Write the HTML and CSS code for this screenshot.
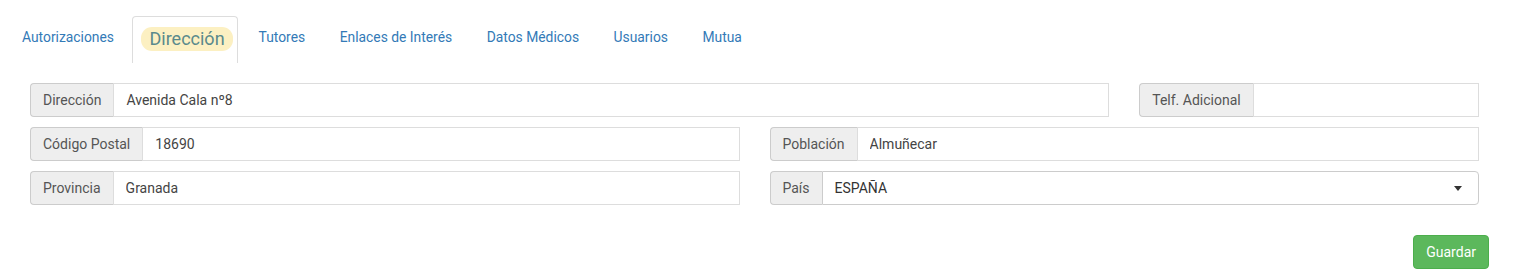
FILE: index.html
```html
<!DOCTYPE html>
<html lang="es">
<head>
    <meta charset="UTF-8">
    <meta name="viewport" content="width=device-width, initial-scale=1.0">
    <title>Dirección</title>
    <link rel="stylesheet" href="styles.css">
</head>
<body>
    <ul class="tabs">
        <li><a href="#">Autorizaciones</a></li>
        <li class="active"><a href="#"><span class="pill">Dirección</span></a></li>
        <li><a href="#">Tutores</a></li>
        <li><a href="#">Enlaces de Interés</a></li>
        <li><a href="#">Datos Médicos</a></li>
        <li><a href="#">Usuarios</a></li>
        <li><a href="#">Mutua</a></li>
    </ul>

    <form class="tab-body" id="direccionForm">
        <div class="row">
            <div class="col col-9">
                <div class="input-group">
                    <span class="addon">Dirección</span>
                    <input type="text" class="field" value="Avenida Cala nº8">
                </div>
            </div>
            <div class="col col-3">
                <div class="input-group">
                    <span class="addon">Telf. Adicional</span>
                    <input type="text" class="field" value="">
                </div>
            </div>
        </div>
        <div class="row">
            <div class="col col-6">
                <div class="input-group">
                    <span class="addon">Código Postal</span>
                    <input type="text" class="field" value="18690">
                </div>
            </div>
            <div class="col col-6">
                <div class="input-group">
                    <span class="addon">Población</span>
                    <input type="text" class="field" value="Almuñecar">
                </div>
            </div>
        </div>
        <div class="row">
            <div class="col col-6">
                <div class="input-group">
                    <span class="addon">Provincia</span>
                    <input type="text" class="field" value="Granada">
                </div>
            </div>
            <div class="col col-6">
                <div class="input-group">
                    <span class="addon">País</span>
                    <span class="select">
                        <span class="select-value">ESPAÑA</span>
                        <span class="caret"></span>
                    </span>
                </div>
            </div>
        </div>

        <div class="actions">
            <button type="submit" class="btn-save">Guardar</button>
        </div>
    </form>
</body>
</html>
```

FILE: styles.css
```css
body {
    font-family: 'Roboto', 'Liberation Sans', sans-serif;
    font-size: 14px;
    margin: 0;
    padding: 0;
    background-color: #fff;
    color: #333;
}

/* pestañas */
.tabs {
    display: flex;
    list-style: none;
    margin: 0;
    padding: 16px 0 0 6px;
}

.tabs li {
    margin-right: 2.5px;
}

.tabs a {
    display: block;
    padding: 10px 15px 16px;
    line-height: 20px;
    font-size: 13.85px;
    color: #337ab7;
    text-decoration: none;
    border: 1px solid transparent;
    border-bottom: 0;
    border-radius: 4px 4px 0 0;
}

.tabs li.active {
    margin-right: 5px;
}

.tabs li.active a {
    padding: 10px 4px 12px 8px;
    border-color: #ddd;
    color: #5a8a8c;
}

.pill {
    display: inline-block;
    font-size: 18px;
    line-height: 24px;
    padding: 0 8px;
    background-color: #fcf0c2;
    border-radius: 11px;
}

/* formulario */
.tab-body {
    padding: 20px 45px 0 30px;
}

.row {
    display: flex;
    margin: 0 -15px;
}

.col {
    padding: 0 15px;
    box-sizing: border-box;
}

.col-9 { width: 75%; }
.col-6 { width: 50%; }
.col-3 { width: 25%; }

.input-group {
    display: flex;
    height: 34px;
    margin-bottom: 10px;
}

.addon {
    padding: 6px 12px;
    line-height: 20px;
    color: #555;
    background-color: #eee;
    border: 1px solid #ccc;
    border-right: 0;
    border-radius: 4px 0 0 4px;
    white-space: nowrap;
}

.field {
    flex: 1;
    min-width: 0;
    padding: 6px 12px;
    font-family: inherit;
    font-size: 14px;
    line-height: 20px;
    color: #444;
    border: 1px solid #ddd;
    border-radius: 0;
    outline: none;
}

.select {
    flex: 1;
    display: flex;
    align-items: center;
    padding: 0 16px 0 12px;
    color: #333;
    border: 1px solid #ccc;
    border-radius: 0 4px 4px 0;
}

.select-value {
    flex: 1;
}

.caret {
    width: 0;
    height: 0;
    border-style: solid;
    border-width: 5px 4px 0 4px;
    border-color: #333 transparent transparent transparent;
}

.actions {
    display: flex;
    justify-content: flex-end;
    margin-right: -10px;
    padding-top: 20px;
}

.btn-save {
    padding: 6px 12px;
    font-family: inherit;
    font-size: 14px;
    line-height: 20px;
    color: #fff;
    background-color: #5cb85c;
    border: 1px solid #4cae4c;
    border-radius: 4px;
    cursor: pointer;
}

.btn-save:hover {
    background-color: #449d44;
}
```
